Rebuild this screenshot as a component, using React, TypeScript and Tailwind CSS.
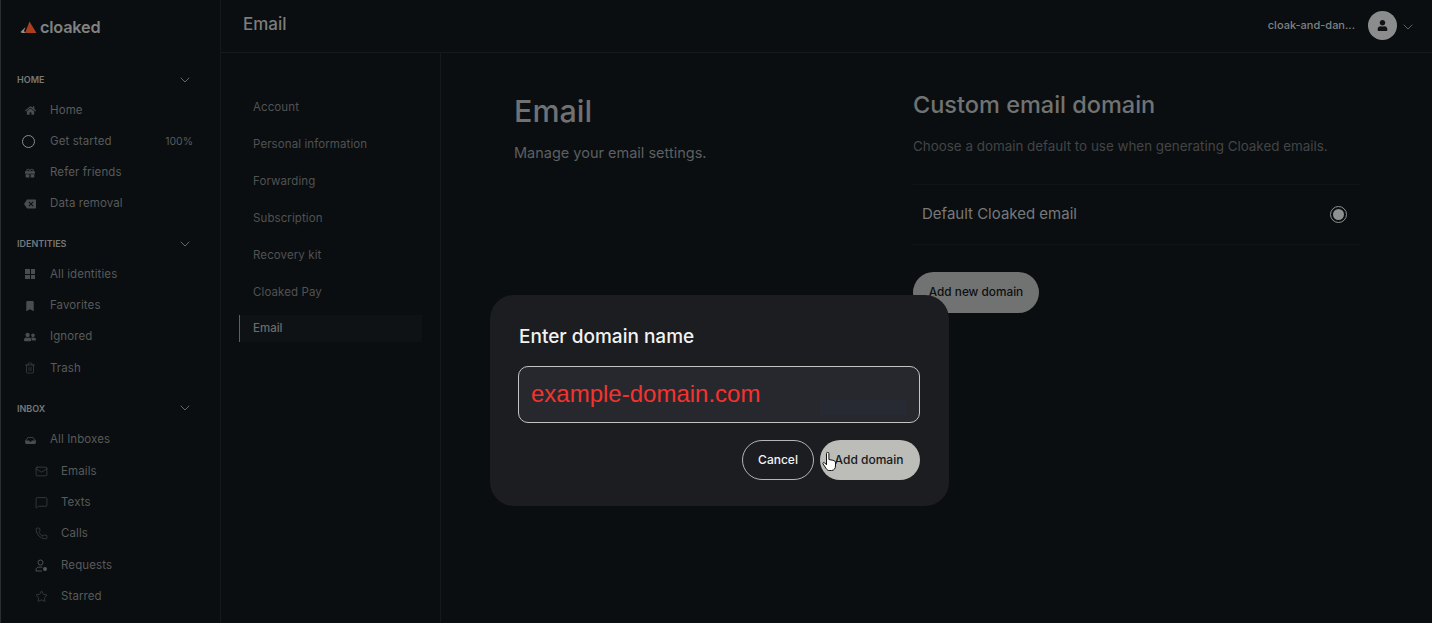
import { ReactNode } from "react";
import { ChevronDown, Mail, MessageSquare, Phone, Star, Trash2 } from "lucide-react";
import { BsBookmarkFill, BsInboxFill } from "react-icons/bs";
import { FaGift, FaHome, FaUser, FaUserFriends } from "react-icons/fa";
import { MdBackspace } from "react-icons/md";

function Logo() {
  return (
    <div className="flex h-[52px] items-center pl-[19px] pt-[3px]">
      <svg width="17" height="13" viewBox="0 0 17 13" className="mr-[3px]">
        <path d="M9.5 0.5 L16.5 12 L5 12 Z" fill="#a8401f" />
        <path d="M5.5 6 L0.5 11 L2 12 L5.5 12 L4 10 Z" fill="#8f8f8f" />
      </svg>
      <span className="text-[16.3px] font-semibold tracking-[-0.2px] text-[#808282]">cloaked</span>
    </div>
  );
}

function SectionLabel({ children }: { children: ReactNode }) {
  return (
    <div className="flex h-[20px] items-center justify-between pl-[16px] pr-[27px]">
      <span className="text-[9px] font-semibold text-[#77797a]">{children}</span>
      <ChevronDown size={16} strokeWidth={1.25} className="text-[#77797a]" />
    </div>
  );
}

function Row({ icon, label, sub, right }: { icon: ReactNode; label: string; sub?: boolean; right?: string }) {
  return (
    <div className={`flex h-[31.3px] items-center pr-[27px] ${sub ? "pl-[32px]" : "pl-[21px]"}`}>
      <span className={`flex w-[16px] justify-center ${sub ? "text-[#565859]" : "text-[#4a4c4d]"}`}>{icon}</span>
      <span className="ml-[12px] flex-1 text-[11.5px] tracking-[0.1px] text-[#585a5b]">{label}</span>
      {right && <span className="text-[10.5px] text-[#585a5b]">{right}</span>}
    </div>
  );
}

// user outline with a small filled badge, lucide has no exact match
function RequestsIcon() {
  return (
    <svg width="13" height="13" viewBox="0 0 13 13" fill="none" stroke="currentColor" strokeWidth="0.9">
      <circle cx="5.5" cy="3.5" r="2.5" />
      <path d="M1 12v-1.2C1 9 2.5 8 5.5 8c.7 0 1.3.1 1.8.2" />
      <path d="M1 12h6" />
      <circle cx="10" cy="10" r="2" fill="currentColor" stroke="none" />
    </svg>
  );
}

function Sidebar() {
  return (
    <aside className="w-[221px] shrink-0 border-l border-r border-l-[#2b2d2e] border-r-[#15191b]">
      <Logo />
      <div className="pt-[18px]">
        <SectionLabel>HOME</SectionLabel>
        <div className="mt-[4.5px] mb-[14.5px]">
          <Row icon={<FaHome size={11} />} label="Home" />
          <Row
            icon={<span className="ml-[-4px] h-[13px] w-[13px] rounded-full border border-[#8a8c8c]" />}
            label="Get started"
            right="100%"
          />
          <Row icon={<FaGift size={10} />} label="Refer friends" />
          <Row icon={<MdBackspace size={12} />} label="Data removal" />
        </div>
        <SectionLabel>IDENTITIES</SectionLabel>
        <div className="mt-[4.5px] mb-[14.5px]">
          <Row
            icon={
              <span className="grid grid-cols-2 gap-[1px]">
                <i className="h-[4.5px] w-[4.5px] bg-current" />
                <i className="h-[4.5px] w-[4.5px] bg-current" />
                <i className="h-[4.5px] w-[4.5px] bg-current" />
                <i className="h-[4.5px] w-[4.5px] bg-current" />
              </span>
            }
            label="All identities"
          />
          <Row icon={<BsBookmarkFill size={10} />} label="Favorites" />
          <Row icon={<FaUserFriends size={12} />} label="Ignored" />
          <Row icon={<Trash2 size={12} strokeWidth={1.25} />} label="Trash" />
        </div>
        <SectionLabel>INBOX</SectionLabel>
        <div className="mt-[6px]">
          <Row icon={<BsInboxFill size={11} />} label="All Inboxes" />
          <Row sub icon={<Mail size={13} strokeWidth={1} />} label="Emails" />
          <Row sub icon={<MessageSquare size={13} strokeWidth={1} />} label="Texts" />
          <Row sub icon={<Phone size={13} strokeWidth={1} />} label="Calls" />
          <Row sub icon={<RequestsIcon />} label="Requests" />
          <Row sub icon={<Star size={13} strokeWidth={1} />} label="Starred" />
        </div>
      </div>
    </aside>
  );
}

function Header() {
  return (
    <header className="flex h-[53px] shrink-0 items-center justify-between border-b border-[#15191b] pb-[2px] pl-[22px] pr-[16px]">
      <span className="mt-[-1px] text-[17px] font-medium text-[#7b7d7e]">Email</span>
      <div className="flex items-center">
        <span className="text-[11px] font-medium text-[#7f8181]">cloak-and-dan...</span>
        <span className="ml-[13px] flex h-[29px] w-[29px] items-center justify-center rounded-full bg-[#8b8d8d]">
          <FaUser size={11} className="text-[#101314]" />
        </span>
        <ChevronDown size={16} strokeWidth={1} className="ml-[3px] mt-[4px] text-[#8a8c8c]" />
      </div>
    </header>
  );
}

const settings = ["Account", "Personal information", "Forwarding", "Subscription", "Recovery kit", "Cloaked Pay"];

function SubNav() {
  return (
    <nav className="w-[220px] shrink-0 border-r border-[#15191b] pt-[36px] pl-[18px] pr-[18px]">
      {settings.map((s) => (
        <div key={s} className="flex h-[37px] items-center pl-[14px] text-[11.5px] tracking-[0.1px] text-[#505253]">
          {s}
        </div>
      ))}
      <div className="mt-[4px] flex h-[27px] items-center border-l border-[#5d5f60] bg-[#0e1214] pl-[13px] text-[11.5px] font-medium text-[#6a6c6d]">
        Email
      </div>
    </nav>
  );
}

function Content() {
  return (
    <main className="flex flex-1 pt-[39px] pl-[73px]">
      <div className="w-[399px] shrink-0">
        <h1 className="text-[30.5px] font-medium leading-[38px] text-[#6f7172]">Email</h1>
        <p className="mt-[12px] text-[14.5px] leading-[22px] text-[#5d5f60]">Manage your email settings.</p>
      </div>
      <div className="w-[448px] mt-[-3px]">
        <h2 className="text-[23.5px] font-medium leading-[32px] text-[#717373]">Custom email domain</h2>
        <p className="mt-[15px] text-[13.4px] leading-[20px] text-[#434546]">
          Choose a domain default to use when generating Cloaked emails.
        </p>
        <div className="mt-[28px] flex h-[61px] items-center justify-between border-t border-b border-[#101416] pl-[9px] pr-[14px]">
          <span className="text-[15px] text-[#77797a]">Default Cloaked email</span>
          <span className="flex h-[17px] w-[17px] items-center justify-center rounded-full border border-[#909292]">
            <span className="h-[11px] w-[11px] rounded-full bg-[#8f9191]" />
          </span>
        </div>
        <button className="mt-[27px] h-[41px] w-[126px] rounded-full bg-[#717372] text-[11.8px] font-medium text-[#0c0f10]">
          Add new domain
        </button>
      </div>
    </main>
  );
}

function DomainDialog() {
  return (
    <div className="absolute left-[490px] top-[295px] h-[211px] w-[459px] rounded-[24px] bg-[#1c1d21] pt-[31px] pl-[28px] pr-[29px]">
      <h3 className="pl-[1px] text-[19px] font-medium leading-[22px] text-[#f2f2f2]">Enter domain name</h3>
      <div className="relative mt-[18px] flex h-[57px] items-center rounded-[10px] border border-[#c4c4c4] bg-[#27282d] pb-[1px] pl-[12px]">
        <span className="font-['Liberation_Sans',sans-serif] text-[24px] text-[#f5332e]">example-domain.com</span>
        <span className="absolute left-[301px] top-[33px] h-[15px] w-[87px] bg-[#272a33]" />
      </div>
      <div className="relative mt-[17px] flex justify-end gap-[6px]">
        <button className="h-[40px] w-[72px] rounded-full border border-[#b5b5b5] text-[12px] font-medium text-[#f2f2f2]">
          Cancel
        </button>
        <button className="h-[40px] w-[100px] rounded-full bg-[#bcbdb9] pr-[2px] text-[12px] font-medium text-[#17181a]">
          Add domain
        </button>
        <svg width="16" height="20" viewBox="0 0 16 20" className="absolute right-[82px] top-[12px]">
          <path
            d="M4.5 1.5a1.2 1.2 0 0 1 2.4 0v6l4 .8c1.6.4 2.6 1 2.6 2.6v3.1c0 2.2-1.3 4.5-4 4.5H7.2c-1.4 0-2.3-.7-3-1.8L1 11.8c-.5-.9.7-1.9 1.6-1l1.9 2z"
            fill="#fff"
            stroke="#111"
            strokeWidth="1"
          />
        </svg>
      </div>
    </div>
  );
}

export default function App() {
  return (
    <div className="relative flex h-[623px] w-full overflow-hidden bg-[#0a0e10] font-['Inter',sans-serif]">
      <Sidebar />
      <div className="flex flex-1 flex-col">
        <Header />
        <div className="flex flex-1">
          <SubNav />
          <Content />
        </div>
      </div>
      <DomainDialog />
    </div>
  );
}
